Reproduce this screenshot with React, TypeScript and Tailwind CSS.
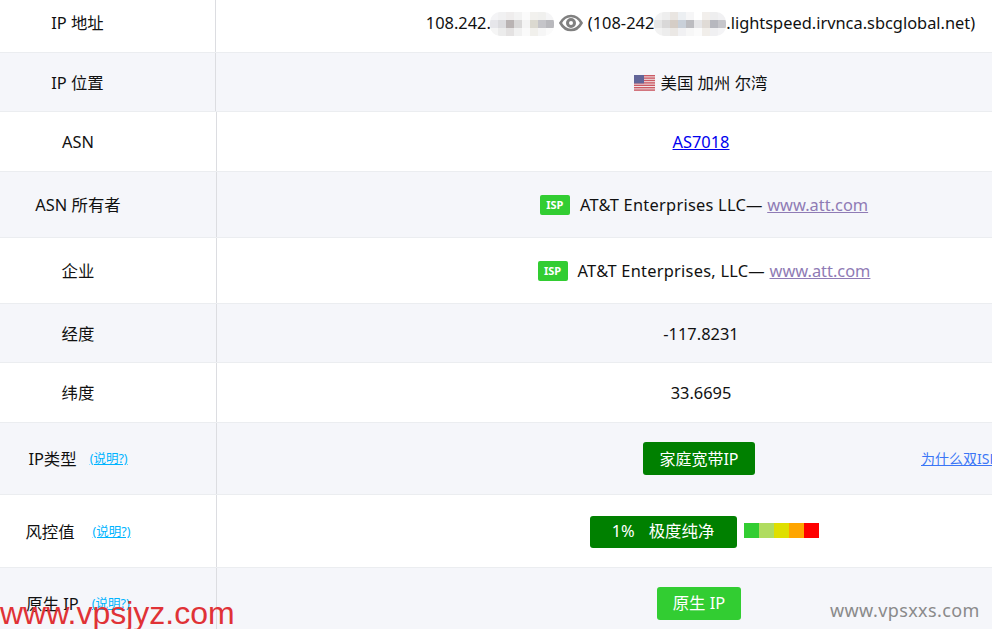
const FONT = "font-['Noto_Sans','Noto_Sans_CJK_SC',sans-serif]"

const mosaicA = [
  ['#f4f4f6', '#f1f1f2', '#efeded', '#f3f3f3', '#fbfbfb', '#f2f1ee', '#f0f0ee', '#f5f5f6'],
  ['#e6e6ea', '#dcdcdf', '#b9b3b3', '#d9d8d8', '#f4f4f4', '#dbd9d0', '#c5c5c9', '#b9b9bd'],
  ['#f5f5f5', '#ececec', '#e4e2e2', '#f1f1f1', '#fafafa', '#f1f0ec', '#f6f6f6', '#fbfbfb'],
]
const mosaicB = [
  ['#f3f3f3', '#eeeeee', '#e9e5e1', '#eceff2', '#f6f6f7', '#ffffff', '#f2efec', '#eeeeef', '#f1f1f3'],
  ['#e6e6e6', '#d9d8d8', '#d5cdc6', '#c9d0d9', '#bcbcc0', '#e6e6e8', '#e0dbd6', '#b7b8bf', '#c6c6cb'],
  ['#f2f2f2', '#ededed', '#ebe8e5', '#f1f1f3', '#f7f7f7', '#fbfbfb', '#f1eeea', '#f0f0f2', '#f4f4f6'],
]

function Mosaic({ cells, className = '' }: { cells: string[][]; className?: string }) {
  const w = cells[0].length * 8
  return (
    <svg width={w} height={24} className={`shrink-0 rounded-[10px] ${className}`}>
      {cells.map((row, y) =>
        row.map((c, x) => <rect key={`${x}-${y}`} x={x * 8} y={y * 8} width={8} height={8} fill={c} />),
      )}
    </svg>
  )
}

function Flag() {
  return (
    <svg width={21} height={16} viewBox="0 0 21 16" className="shrink-0">
      <rect width={21} height={16} rx={1} fill="#f0e6e8" />
      {[0, 2.4, 4.8, 7.2, 9.6, 12, 14.4].map((y) => (
        <rect key={y} y={y} width={21} height={1.4} fill="#cb5a64" />
      ))}
      <rect width={10} height={8.4} fill="#626598" />
    </svg>
  )
}

function Row({
  label,
  alt,
  h,
  pad = 'pt-[2px]',
  w = 'w-[217px]',
  children,
}: {
  label: React.ReactNode
  alt?: boolean
  h: string
  pad?: string
  w?: string
  children: React.ReactNode
}) {
  return (
    <div className={`flex w-[1185px] border-b border-[#ebedf0] ${h} ${alt ? 'bg-[#f5f6fa]' : 'bg-white'}`}>
      <div className={`flex items-center justify-center border-r border-[#dcdde1] pr-[60px] ${w} ${pad}`}>
        {label}
      </div>
      <div className={`relative flex flex-1 items-center justify-center ${pad}`}>{children}</div>
    </div>
  )
}

function Help({ className = '' }: { className?: string }) {
  return <a className={`text-[12.5px] text-[#00b4ff] underline ${className}`}>(说明?)</a>
}

function Isp() {
  return (
    <span className="mr-[10px] flex h-5 w-[30px] items-center justify-center rounded-[2px] bg-[#32cd32] text-[11px] font-bold text-white">
      ISP
    </span>
  )
}

export default function App() {
  return (
    <div className={`relative h-[629px] w-[992px] overflow-hidden bg-white text-[16.4px] text-[#111] ${FONT}`}>
      <Row label="IP 地址" h="h-[53px]" pad="pb-[5px]" w="w-[216px]">
        <span className="flex items-center whitespace-nowrap">
          108.242.
          <Mosaic cells={mosaicA} className="-ml-[1px] translate-y-[1px]" />
          <svg width={24} height={24} viewBox="0 0 24 24" className="mx-[5px]" fill="none" stroke="#808080" strokeWidth={2.6}>
            <path d="M1.5 12C4 7.500 7.500 5 12 5s8 2.500 10.500 7C20 16.500 16.500 19 12 19s-8-2.500-10.500-7z" />
            <circle cx={12} cy={12} r={3.500} strokeWidth={3} />
          </svg>
          (108-242
          <Mosaic cells={mosaicB} className="translate-y-[1px]" />
          .lightspeed.irvnca.sbcglobal.net)
        </span>
      </Row>
      <Row label="IP 位置" alt h="h-[59px]" w="w-[216px]">
        <span className="flex items-center gap-[6px]">
          <Flag />
          美国 加州 尔湾
        </span>
      </Row>
      <Row label="ASN" h="h-[60px]">
        <a className="text-[#0000ee] underline">AS7018</a>
      </Row>
      <Row label="ASN 所有者" alt h="h-[66px]">
        <span className="ml-[6px] flex items-center">
          <Isp />
          <span className="tracking-[0.25px]">AT&amp;T Enterprises LLC—&nbsp;</span>
          <a className="text-[#8f7bb5] underline">www.att.com</a>
        </span>
      </Row>
      <Row label="企业" h="h-[66px]">
        <span className="ml-[6px] flex items-center">
          <Isp />
          <span className="tracking-[0.25px]">AT&amp;T Enterprises, LLC—&nbsp;</span>
          <a className="text-[#8f7bb5] underline">www.att.com</a>
        </span>
      </Row>
      <Row label="经度" alt h="h-[59px]">
        -117.8231
      </Row>
      <Row label="纬度" h="h-[60px]">
        33.6695
      </Row>
      <Row
        label={
          <span className="mt-[2px] flex items-center gap-[13px] whitespace-nowrap">
            IP类型
            <Help />
          </span>
        }
        alt
        h="h-[72px]"
        pad=""
      >
        <span className="-ml-[4px] flex h-[33px] w-[112px] items-center justify-center rounded-[3px] bg-[#008000] text-[16px] text-white">
          家庭宽带IP
        </span>
        <a className="absolute left-[704px] top-[25px] whitespace-nowrap text-[14px] text-[#3b76f6] underline">为什么双ISP</a>
      </Row>
      <Row
        label={
          <span className="mt-[2px] flex items-center gap-[18px] whitespace-nowrap">
            风控值
            <Help />
          </span>
        }
        h="h-[73px]"
        pad="pt-[1px]"
      >
        <span className="ml-[6px] flex items-center gap-[7px]">
          <span className="flex h-8 w-[147px] items-center justify-center gap-[14px] rounded-[3px] bg-[#008000] text-[16.4px] text-white">
            <span>1%</span>
            <span>极度纯净</span>
          </span>
          <span className="flex h-[15px] -translate-y-[1px]">
            <span className="w-[15px] bg-[#32cd32]" />
            <span className="w-[15px] bg-[#b0dc60]" />
            <span className="w-[15px] bg-[#dfdf00]" />
            <span className="w-[15px] bg-[#ffa500]" />
            <span className="w-[15px] bg-[#ff0000]" />
          </span>
        </span>
      </Row>
      <Row
        label={
          <span className="mt-[2px] flex items-center gap-[13px] whitespace-nowrap">
            原生 IP
            <Help />
          </span>
        }
        alt
        h="h-[72px]"
        pad=""
      >
        <span className="-ml-[4px] flex h-[33px] w-[84px] items-center justify-center rounded-[3px] bg-[#32cd32] text-white">
          原生 IP
        </span>
      </Row>

      {/* watermarks */}
      <span className="absolute bottom-[-3px] left-0 font-['Liberation_Sans',sans-serif] text-[32px] leading-[38px] text-[#e03236]">
        www.vpsjyz.com
      </span>
      <span className="absolute left-[830px] top-[597px] font-['Noto_Sans',sans-serif] text-[18px] leading-[26px] tracking-[0.4px] text-[#8a8a8a]">
        www.vpsxxs.com
      </span>
    </div>
  )
}
